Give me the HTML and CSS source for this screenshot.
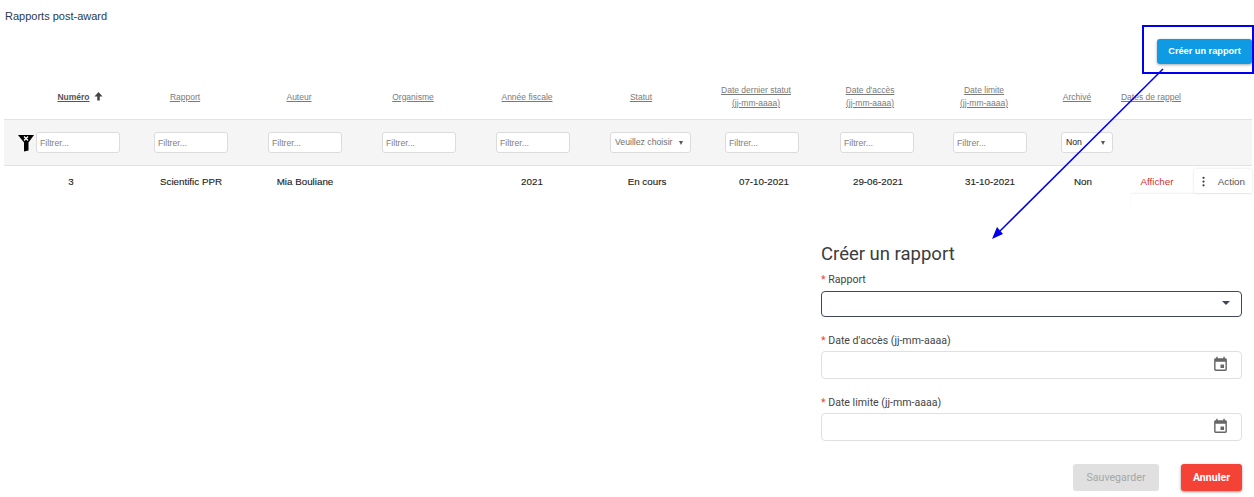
FILE: index.html
```html
<!DOCTYPE html>
<html lang="fr">
<head>
<meta charset="utf-8">
<title>Rapports post-award</title>
<link rel="stylesheet" href="styles.css">
</head>
<body>
<main class="page">
  <h1 class="page-title">Rapports post-award</h1>
  <div class="toolbar">
    <button class="btn-create" type="button">Créer un rapport</button>
  </div>

  <div class="head-row">
    <a class="head-cell head-first"><span class="sorted">Numéro</span>
      <svg class="sort-arrow" viewBox="0 0 10 10"><path d="M5 0.5 9.5 5.5H6.4V10H3.6V5.5H.5Z"/></svg></a>
    <a class="head-cell"><span>Rapport</span></a>
    <a class="head-cell"><span>Auteur</span></a>
    <a class="head-cell"><span>Organisme</span></a>
    <a class="head-cell"><span>Année fiscale</span></a>
    <a class="head-cell"><span>Statut</span></a>
    <a class="head-cell"><span>Date dernier statut</span><span>(jj-mm-aaaa)</span></a>
    <a class="head-cell"><span>Date d'accès</span><span>(jj-mm-aaaa)</span></a>
    <a class="head-cell"><span>Date limite</span><span>(jj-mm-aaaa)</span></a>
    <a class="head-cell"><span>Archivé</span></a>
    <a class="head-cell"><span>Dates de rappel</span></a>
  </div>

  <div class="filter-row">
    <div class="filter-first">
      <svg class="funnel" viewBox="0 0 16 17"><path d="M0 0H16L10.5 7.5V15.5L6 16.5V7.5Z"/><path class="funnel-x" d="M6 1.5 10 5.5M10 1.5 6 5.5"/></svg>
      <input class="filter-input filter-wide" placeholder="Filtrer...">
    </div>
    <input class="filter-input" placeholder="Filtrer...">
    <input class="filter-input" placeholder="Filtrer...">
    <input class="filter-input" placeholder="Filtrer...">
    <input class="filter-input" placeholder="Filtrer...">
    <div class="filter-select filter-status"><span class="select-muted">Veuillez choisir</span><i class="mini-caret"></i></div>
    <input class="filter-input" placeholder="Filtrer...">
    <input class="filter-input" placeholder="Filtrer...">
    <input class="filter-input" placeholder="Filtrer...">
    <div class="filter-select filter-archive"><span>Non</span><i class="mini-caret"></i></div>
  </div>

  <div class="data-row">
    <div class="data-cell">3</div>
    <div class="data-cell">Scientific PPR</div>
    <div class="data-cell">Mia Bouliane</div>
    <div class="data-cell"></div>
    <div class="data-cell">2021</div>
    <div class="data-cell">En cours</div>
    <div class="data-cell">07-10-2021</div>
    <div class="data-cell">29-06-2021</div>
    <div class="data-cell">31-10-2021</div>
    <div class="data-cell">Non</div>
    <div class="data-cell link-show">Afficher</div>
    <div class="action-box">
      <svg class="kebab" viewBox="0 0 4 14"><circle cx="2" cy="2" r="1.5"/><circle cx="2" cy="7" r="1.5"/><circle cx="2" cy="12" r="1.5"/></svg>
      <span>Action</span>
    </div>
    <div class="action-card"></div>
  </div>

  <section class="form-panel">
    <h2 class="form-title">Créer un rapport</h2>
    <div class="field field-first">
      <label class="field-label"><b>*</b> Rapport</label>
      <div class="control control-active"><i class="caret"></i></div>
    </div>
    <div class="field field-date">
      <label class="field-label"><b>*</b> Date d'accès (jj-mm-aaaa)</label>
      <div class="control control-date">
        <svg class="cal" viewBox="0 0 24 24"><path d="M17 12h-5v5h5v-5zM16 1v2H8V1H6v2H5c-1.11 0-1.99.9-1.99 2L3 19c0 1.1.89 2 2 2h14c1.1 0 2-.9 2-2V5c0-1.1-.9-2-2-2h-1V1h-2zm3 18H5V8h14v11z"/></svg>
      </div>
    </div>
    <div class="field field-date">
      <label class="field-label"><b>*</b> Date limite (jj-mm-aaaa)</label>
      <div class="control control-date">
        <svg class="cal" viewBox="0 0 24 24"><path d="M17 12h-5v5h5v-5zM16 1v2H8V1H6v2H5c-1.11 0-1.99.9-1.99 2L3 19c0 1.1.89 2 2 2h14c1.1 0 2-.9 2-2V5c0-1.1-.9-2-2-2h-1V1h-2zm3 18H5V8h14v11z"/></svg>
      </div>
    </div>
    <div class="form-actions">
      <button class="btn-save" type="button" disabled>Sauvegarder</button>
      <button class="btn-cancel" type="button">Annuler</button>
    </div>
  </section>
</main>

<div class="callout-box"></div>
<svg class="callout-arrow" viewBox="0 0 1254 497">
  <path class="arrow-line" d="M1163 69 1000 231"/>
  <path class="arrow-head" d="M992 239 997 227 1003 234Z"/>
</svg>
</body>
</html>
```
FILE: styles.css
```css
* { box-sizing: border-box; }
html, body { margin: 0; padding: 0; background: #fff; }
body { font-family: "Liberation Sans", Arial, sans-serif; color: #222; overflow: hidden; height: 497px; }

.page { padding: 0 2px 0 4px; }

.page-title {
  margin: 0;
  padding: 9px 0 0 1px;
  height: 39px;
  font-size: 11px;
  line-height: 14px;
  font-weight: 400;
  color: #2a3a4c;
}

.toolbar { display: flex; justify-content: flex-end; height: 42px; }

.btn-create {
  width: 95px;
  height: 25px;
  padding: 0;
  border: 0;
  border-radius: 3px;
  background: #0f9be3;
  color: #fff;
  font: 700 9.2px/25px "Liberation Sans", Arial, sans-serif;
  box-shadow: 0 1px 3px rgba(0,0,0,.35);
}

.head-row {
  display: grid;
  grid-template-columns: 124px repeat(5, 114px) 116px 112px 116px 70px 78px;
  height: 38px;
  padding-bottom: 6px;
  align-items: center;
}

.head-cell {
  display: flex;
  flex-direction: column;
  align-items: center;
  gap: 2px;
  font-size: 8.5px;
  line-height: 11px;
  color: #7a7a7a;
  white-space: nowrap;
}
.head-cell span { text-decoration: underline; }

.head-first { flex-direction: row; justify-content: center; gap: 4px; padding-left: 28px; }
.head-first .sorted { color: #555; font-weight: 700; }
.sort-arrow { width: 9px; height: 10px; fill: #444; margin-top: -2px; }

.filter-row {
  display: grid;
  grid-template-columns: 150px repeat(4, 114px) 115px 115px 113px 108px 52px;
  align-items: center;
  height: 47px;
  background: #f5f5f5;
  border-top: 1px solid #e2e2e2;
  border-bottom: 1px solid #e2e2e2;
}

.filter-first { display: flex; align-items: center; padding-left: 14px; gap: 2px; }
.funnel { width: 16px; height: 17px; margin-top: 2px; fill: #000; }
.funnel-x { stroke: #fff; stroke-width: 1.3; fill: none; }

.filter-input,
.filter-select {
  width: 74px;
  height: 21px;
  background: #fff;
  border: 1px solid #dcdcdc;
  border-radius: 3px;
  padding: 0 3px;
  font: 8.7px/19px "Liberation Sans", Arial, sans-serif;
}
.filter-input { outline: 0; }
.filter-input::placeholder { color: #808080; opacity: 1; }
.filter-wide { width: 84px; }

.filter-select { display: flex; align-items: center; justify-content: space-between; color: #222; padding-left: 4px; }
.filter-status { width: 81px; }
.filter-archive { width: 52px; }
.select-muted { color: #707070; }

.mini-caret {
  width: 0;
  height: 0;
  margin-right: 4px;
  border-left: 2.5px solid transparent;
  border-right: 2.5px solid transparent;
  border-top: 4px solid #555;
}

.data-row {
  position: relative;
  display: grid;
  grid-template-columns: 134px 106px 122px 106px 120px 110px 124px 104px 120px 66px 82px 54px;
  align-items: center;
  height: 30px;
}

.data-cell {
  text-align: center;
  font-size: 9.8px;
  font-weight: 400;
  color: #222;
  -webkit-text-stroke: .12px #222;
  white-space: nowrap;
}
.link-show { color: #d32f2f; -webkit-text-stroke: 0; }

.action-box {
  display: flex;
  align-items: center;
  justify-content: space-between;
  margin-left: -4px;
  width: 58px;
  height: 24px;
  padding: 0 7px 0 8px;
  background: #fff;
  border-radius: 3px;
  box-shadow: 0 0 3px rgba(0,0,0,.12);
  font-size: 9.8px;
  color: #555;
  z-index: 1;
}

.kebab { width: 3px; height: 11px; fill: #34405a; }

.action-card {
  position: absolute;
  left: 1127px;
  top: 28px;
  width: 120px;
  height: 12px;
  background: #fff;
  border-radius: 3px 3px 0 0;
  box-shadow: 0 -1px 2px rgba(0,0,0,.07);
}

.form-panel {
  width: 421px;
  margin: 45px 0 0 817px;
  font-family: Roboto, "Liberation Sans", sans-serif;
}

.form-title {
  margin: 0;
  height: 28px;
  font-size: 18.5px;
  line-height: 26px;
  font-weight: 400;
  color: #3c3c3c;
}

.field-date { margin-top: 14px; }

.field-label {
  display: block;
  height: 22px;
  padding-top: 4px;
  font-size: 10.6px;
  line-height: 14px;
  color: #444;
}
.field-date .field-label { height: 20px; padding-top: 2.5px; }
.field-label b { color: #f44336; font-weight: 400; }

.control {
  position: relative;
  height: 28px;
  background: #fff;
  border: 1px solid #e0e0e0;
  border-radius: 4px;
  display: flex;
  align-items: center;
  justify-content: flex-end;
  padding-right: 11px;
}
.control-active { height: 26px; border-color: #3f4658; }
.control-date { padding-right: 13px; }

.caret {
  width: 0;
  height: 0;
  margin-bottom: 2px;
  border-left: 4.5px solid transparent;
  border-right: 4.5px solid transparent;
  border-top: 4px solid #3f4658;
}

.cal { width: 17px; height: 17px; fill: #666; margin: 0 -1px 2px 0; }

.form-actions {
  display: flex;
  justify-content: flex-end;
  gap: 22px;
  margin-top: 23px;
}

.btn-save,
.btn-cancel {
  height: 27px;
  padding: 0;
  border: 0;
  border-radius: 3px;
  font-family: inherit;
  font-size: 10.6px;
}
.btn-save { width: 86px; background: #e0e0e0; color: #a6a6a6; }
.btn-cancel {
  width: 61px;
  background: #f44336;
  color: #fff;
  font-weight: 700;
  box-shadow: 0 1px 3px rgba(0,0,0,.4);
}

.callout-box {
  position: absolute;
  left: 1142px;
  top: 25px;
  width: 112px;
  height: 49px;
  border: 2px solid #0000f0;
}

.callout-arrow {
  position: absolute;
  left: 0;
  top: 0;
  width: 1254px;
  height: 497px;
  pointer-events: none;
}
.arrow-line { stroke: #0000e6; stroke-width: 1.5; fill: none; }
.arrow-head { fill: #0000e6; }
```
